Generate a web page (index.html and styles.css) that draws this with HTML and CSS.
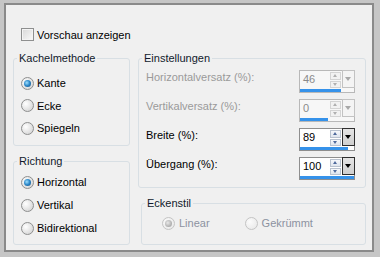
FILE: index.html
```html
<!DOCTYPE html>
<html lang="de">
<head>
  <meta charset="UTF-8">
  <link rel="stylesheet" href="styles.css">
  <title>Kacheln</title>
</head>
<body>
  <div class="frame">
    <div class="panel">
      <div class="check-row">
        <span class="checkbox"></span>
        <span>Vorschau anzeigen</span>
      </div>
      <div class="columns">
        <div class="col-left">
          <fieldset class="group group-method">
            <legend>Kachelmethode</legend>
            <div class="radio-row"><span class="radio checked"></span>Kante</div>
            <div class="radio-row"><span class="radio"></span>Ecke</div>
            <div class="radio-row"><span class="radio"></span>Spiegeln</div>
          </fieldset>
          <fieldset class="group group-dir">
            <legend>Richtung</legend>
            <div class="radio-row"><span class="radio checked"></span>Horizontal</div>
            <div class="radio-row"><span class="radio"></span>Vertikal</div>
            <div class="radio-row"><span class="radio"></span>Bidirektional</div>
          </fieldset>
        </div>
        <div class="col-right">
          <fieldset class="group group-settings">
            <legend>Einstellungen</legend>
            <div class="field-row disabled">
              <span class="field-label">Horizontalversatz (%):</span>
              <div class="spin">
                <div class="spin-top">
                  <span class="spin-value">46</span>
                  <span class="spin-arrows"><i class="up"></i><i class="down"></i></span>
                  <span class="spin-drop"></span>
                </div>
                <div class="spin-bar" style="width: 41px"></div>
              </div>
            </div>
            <div class="field-row disabled">
              <span class="field-label">Vertikalversatz (%):</span>
              <div class="spin">
                <div class="spin-top">
                  <span class="spin-value">0</span>
                  <span class="spin-arrows"><i class="up"></i><i class="down"></i></span>
                  <span class="spin-drop"></span>
                </div>
                <div class="spin-bar" style="width: 28px"></div>
              </div>
            </div>
            <div class="field-row">
              <span class="field-label">Breite (%):</span>
              <div class="spin">
                <div class="spin-top">
                  <span class="spin-value">89</span>
                  <span class="spin-arrows"><i class="up"></i><i class="down"></i></span>
                  <span class="spin-drop"></span>
                </div>
                <div class="spin-bar" style="width: 48px"></div>
              </div>
            </div>
            <div class="field-row">
              <span class="field-label">Übergang (%):</span>
              <div class="spin">
                <div class="spin-top">
                  <span class="spin-value">100</span>
                  <span class="spin-arrows"><i class="up"></i><i class="down"></i></span>
                  <span class="spin-drop"></span>
                </div>
                <div class="spin-bar" style="width: 100%"></div>
              </div>
            </div>
          </fieldset>
          <fieldset class="group group-corner">
            <legend>Eckenstil</legend>
            <div class="corner-options">
              <div class="radio-row disabled"><span class="radio checked"></span>Linear</div>
              <div class="radio-row disabled second"><span class="radio"></span>Gekrümmt</div>
            </div>
          </fieldset>
        </div>
      </div>
    </div>
  </div>
</body>
</html>
```

FILE: styles.css
```css
* {
  box-sizing: border-box;
}
body {
  margin: 0;
  padding: 0;
  font-family: "Liberation Sans", Arial, sans-serif;
  font-size: 11px;
  color: #000;
  background: #c6c6c6;
}
.frame {
  width: 380px;
  height: 257px;
  border-style: solid;
  border-color: #c6c6c6;
  border-width: 3px 6px 5px 4px;
}
.panel {
  height: 100%;
  border: 2px solid #8a8a8a;
  background: #f0f0f0;
  padding: 23px 0 0 7px;
}
.check-row {
  display: flex;
  align-items: center;
  height: 13px;
  margin-left: 8px;
}
.checkbox {
  width: 13px;
  height: 13px;
  margin-right: 3px;
  border: 1px solid #8e8f8f;
  background: linear-gradient(135deg, #d8d8d8, #fafafa);
  box-shadow: inset 0 0 0 1px #f4f4f4;
}
.columns {
  display: flex;
  gap: 8px;
  margin-top: 11px;
}
.col-left {
  width: 117px;
  display: flex;
  flex-direction: column;
  gap: 9px;
}
.col-right {
  width: 228px;
  display: flex;
  flex-direction: column;
  gap: 9px;
}
.group {
  margin: 0;
  padding: 0 0 0 7px;
  border: 1px solid #d8dfe4;
  border-radius: 3px;
}
.group legend {
  padding: 0 2px;
  margin-left: -4px;
  line-height: 13px;
  color: #111a2c;
}
.group-method {
  height: 94px;
  padding-top: 7px;
}
.group-method .radio-row {
  height: 22.5px;
}
.group-dir {
  height: 90px;
  padding-top: 2.5px;
}
.group-dir .radio-row {
  height: 23px;
}
.radio-row {
  display: flex;
  align-items: center;
}
.radio {
  position: relative;
  width: 13px;
  height: 13px;
  margin-right: 3px;
  border: 1px solid #8e8f8f;
  border-radius: 50%;
  background: radial-gradient(circle at 35% 35%, #ffffff, #dcdcdc 70%, #c8c8c8);
}
.radio.checked::after {
  content: "";
  position: absolute;
  left: 2px;
  top: 2px;
  width: 7px;
  height: 7px;
  border-radius: 50%;
  background: radial-gradient(circle at 40% 40%, #9fe0ff, #2a86c8 50%, #164a78);
}
.radio-row.disabled {
  color: #8c92a0;
}
.radio-row.disabled .radio {
  border-color: #c4c4c4;
  background: radial-gradient(circle at 35% 35%, #fbfbfb, #ececec 70%, #e0e0e0);
}
.radio-row.disabled .radio.checked::after {
  background: radial-gradient(circle at 40% 40%, #e8e8e8, #b4b4b4 60%, #9a9a9a);
}
.group-settings {
  height: 136px;
  padding-top: 5px;
  display: flex;
  flex-direction: column;
  gap: 6px;
}
.field-row {
  display: flex;
  align-items: flex-start;
  height: 23px;
}
.field-label {
  width: 153px;
  flex: none;
  line-height: 13px;
  margin-top: 1px;
}
.field-row.disabled .field-label {
  color: #9a9a9a;
}
.spin {
  width: 56px;
  height: 23px;
  border: 1px solid #8e8e8e;
  background: #fff;
  display: flex;
  flex-direction: column;
}
.spin-top {
  display: flex;
  height: 18px;
}
.spin-value {
  flex: 1;
  padding-left: 3px;
  line-height: 16px;
}
.spin-arrows {
  width: 11px;
  display: flex;
  flex-direction: column;
  gap: 1px;
  margin-top: 1px;
}
.spin-arrows i {
  position: relative;
  height: 7.5px;
  border: 1px solid #b9c2cf;
  background: linear-gradient(#f6f8fb, #dfe5ee);
}
.spin-arrows i::after {
  content: "";
  position: absolute;
  left: 2px;
  border-left: 2.5px solid transparent;
  border-right: 2.5px solid transparent;
}
.spin-arrows .up::after {
  top: 1px;
  border-bottom: 3px solid #4f6a9c;
}
.spin-arrows .down::after {
  top: 1.5px;
  border-top: 3px solid #4f6a9c;
}
.spin-drop {
  position: relative;
  width: 13px;
  height: 18px;
  margin: -1px -1px 0 1px;
  border: 1px solid #2e2e2e;
  background: linear-gradient(#e4e4e4, #cfcfcf);
}
.spin-drop::after {
  content: "";
  position: absolute;
  left: 2px;
  top: 6px;
  border-left: 3.5px solid transparent;
  border-right: 3.5px solid transparent;
  border-top: 4px solid #000;
}
.spin-bar {
  height: 3px;
  background: #3592ea;
}
.field-row.disabled .spin {
  border-color: #b8b8b8;
  background: #f7f7f7;
}
.field-row.disabled .spin-value {
  color: #8a8a8a;
}
.field-row.disabled .spin-arrows i {
  border-color: #d4d4d4;
  background: #f2f2f2;
}
.field-row.disabled .spin-arrows .up::after {
  border-bottom-color: #b0b0b0;
}
.field-row.disabled .spin-arrows .down::after {
  border-top-color: #b0b0b0;
}
.field-row.disabled .spin-drop {
  border-color: #c2c2c2;
  background: #f4f4f4;
}
.field-row.disabled .spin-drop::after {
  border-top-color: #a8a8a8;
}
.group-corner {
  height: 48px;
  margin-left: 3px;
  padding: 6.5px 0 0 20px;
}
.group-corner legend {
  margin-left: -17px;
}
.corner-options {
  display: flex;
}
.radio-row.second {
  margin-left: 35px;
}
.corner-options .radio {
  margin-right: 4px;
}
```
